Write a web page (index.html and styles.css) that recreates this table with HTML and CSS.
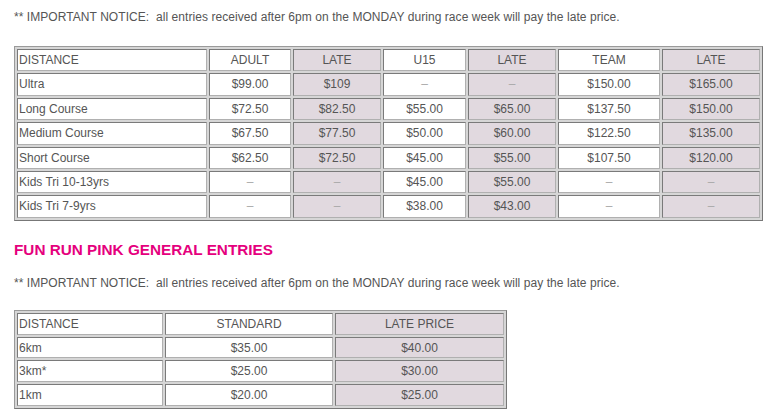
FILE: index.html
```html
<!DOCTYPE html>
<html>
<head>
<meta charset="utf-8">
<link rel="stylesheet" href="styles.css">
</head>
<body>
<p class="notice">** IMPORTANT NOTICE:&nbsp; all entries received after 6pm on the MONDAY during race week will pay the late price.</p>
<table class="prices tri">
  <colgroup>
    <col class="c-dist"><col class="c-adult"><col class="c-late1"><col class="c-u15"><col class="c-late2"><col class="c-team"><col class="c-late3">
  </colgroup>
  <tr><td>DISTANCE</td><td class="num">ADULT</td><td class="num late">LATE</td><td class="num">U15</td><td class="num late">LATE</td><td class="num">TEAM</td><td class="num late">LATE</td></tr>
  <tr><td>Ultra</td><td class="num">$99.00</td><td class="num late">$109</td><td class="num dash">–</td><td class="num late dash">–</td><td class="num">$150.00</td><td class="num late">$165.00</td></tr>
  <tr><td>Long Course</td><td class="num">$72.50</td><td class="num late">$82.50</td><td class="num">$55.00</td><td class="num late">$65.00</td><td class="num">$137.50</td><td class="num late">$150.00</td></tr>
  <tr><td>Medium Course</td><td class="num">$67.50</td><td class="num late">$77.50</td><td class="num">$50.00</td><td class="num late">$60.00</td><td class="num">$122.50</td><td class="num late">$135.00</td></tr>
  <tr><td>Short Course</td><td class="num">$62.50</td><td class="num late">$72.50</td><td class="num">$45.00</td><td class="num late">$55.00</td><td class="num">$107.50</td><td class="num late">$120.00</td></tr>
  <tr><td>Kids Tri 10-13yrs</td><td class="num dash">–</td><td class="num late dash">–</td><td class="num">$45.00</td><td class="num late">$55.00</td><td class="num dash">–</td><td class="num late dash">–</td></tr>
  <tr><td>Kids Tri 7-9yrs</td><td class="num dash">–</td><td class="num late dash">–</td><td class="num">$38.00</td><td class="num late">$43.00</td><td class="num dash">–</td><td class="num late dash">–</td></tr>
</table>
<h2 class="heading">FUN RUN PINK GENERAL ENTRIES</h2>
<p class="notice notice2">** IMPORTANT NOTICE:&nbsp; all entries received after 6pm on the MONDAY during race week will pay the late price.</p>
<table class="prices fun">
  <colgroup><col class="f-dist"><col class="f-std"><col class="f-late"></colgroup>
  <tr><td>DISTANCE</td><td class="num">STANDARD</td><td class="num late">LATE PRICE</td></tr>
  <tr><td>6km</td><td class="num">$35.00</td><td class="num late">$40.00</td></tr>
  <tr><td>3km*</td><td class="num">$25.00</td><td class="num late">$30.00</td></tr>
  <tr><td>1km</td><td class="num">$20.00</td><td class="num late">$25.00</td></tr>
</table>
</body>
</html>
```
FILE: styles.css
```css
html, body {
  margin: 0;
  padding: 0;
  background: #ffffff;
}
body {
  padding: 0 14px;
  font-family: "Liberation Sans", Arial, sans-serif;
  font-size: 12px;
  color: #555555;
}
.notice {
  margin: 0;
  padding-top: 10px;
  line-height: 15px;
  font-size: 12px;
  letter-spacing: 0.06px;
}
.notice2 {
  padding-top: 0;
  margin-top: 17px;
}
.heading {
  margin: 20px 0 0 0;
  font-size: 15.3px;
  line-height: 18px;
  font-weight: bold;
  color: #e5007d;
}
.prices {
  border-collapse: separate;
  border-spacing: 2px;
  border: 1px solid #9a9a9a;
  border-right-color: #777;
  border-bottom-color: #777;
  background: #d6d6d6;
  table-layout: fixed;
}
.tri {
  margin-top: 21px;
  width: 747px;
}
.fun {
  margin-top: 19px;
  width: 491px;
}
.prices td {
  background: #ffffff;
  border: 1px solid #7a7a7a;
  border-right-color: #b0b0b0;
  border-bottom-color: #b0b0b0;
  padding: 3px 1px 2px 1px;
  line-height: 15px;
  white-space: nowrap;
}
.tri td {
  line-height: 15.4px;
}
.fun td {
  line-height: 14.7px;
}
.prices td.num { text-align: center; }
.prices td.late { background: #e1d9df; }
.prices td.dash { color: #aaaaaa; }
.c-dist { width: 190px; }
.c-adult { width: 82px; }
.c-late1 { width: 88px; }
.c-u15 { width: 83px; }
.c-late2 { width: 88px; }
.c-team { width: 102px; }
.c-late3 { width: 98px; }
.f-dist { width: 146px; }
.f-std { width: 168px; }
.f-late { width: 169px; }
```
